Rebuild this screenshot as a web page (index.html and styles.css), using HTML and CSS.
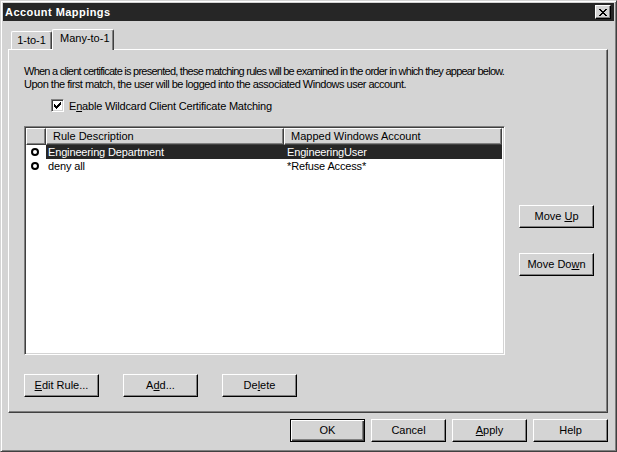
FILE: index.html
```html
<!DOCTYPE html>
<html>
<head>
<meta charset="utf-8">
<link rel="stylesheet" href="styles.css">
</head>
<body>
<div class="window">
  <div class="titlebar">
    <span class="title">Account Mappings</span>
    <span class="close"><svg width="8" height="7" viewBox="0 0 8 7" shape-rendering="crispEdges"><path d="M0 0h2v1h-2zM6 0h2v1h-2zM1 1h2v1h-2zM5 1h2v1h-2zM2 2h4v1h-4zM3 3h2v1h-2zM2 4h4v1h-4zM1 5h2v1h-2zM5 5h2v1h-2zM0 6h2v1h-2zM6 6h2v1h-2z" fill="#000"/></svg></span>
  </div>
  <div class="tabs">
    <div class="tab">1-to-1</div>
    <div class="tab active">Many-to-1</div>
  </div>
  <div class="panel">
    <p class="intro"><span class="line1">When a client certificate is presented, these matching rules will be examined in the order in which they appear below.</span><br>Upon the first match, the user will be logged into the associated Windows user account.</p>
    <div class="check">
      <span class="box"><svg width="7" height="7" viewBox="0 0 7 7" shape-rendering="crispEdges"><path d="M6 0h1v3h-1zM5 1h1v3h-1zM4 2h1v3h-1zM3 3h1v3h-1zM2 4h1v3h-1zM1 3h1v3h-1zM0 2h1v3h-1z" fill="#000"/></svg></span>
      <span>E<u>n</u>able Wildcard Client Certificate Matching</span>
    </div>
    <div class="main">
      <div class="list">
        <div class="header">
          <div class="hcell c0"></div>
          <div class="hcell c1">Rule Description</div>
          <div class="hcell c2">Mapped Windows Account</div>
        </div>
        <div class="row selected">
          <div class="c0"><span class="ring"></span></div>
          <div class="c1">Engineering Department</div>
          <div class="c2">EngineeringUser</div>
        </div>
        <div class="row">
          <div class="c0"><span class="ring"></span></div>
          <div class="c1">deny all</div>
          <div class="c2">*Refuse Access*</div>
        </div>
      </div>
      <div class="side">
        <div class="btn up"><span>Move <u>U</u>p</span></div>
        <div class="btn down"><span>Move Do<u>w</u>n</span></div>
      </div>
    </div>
    <div class="actions">
      <div class="btn"><span><u>E</u>dit Rule...</span></div>
      <div class="btn"><span>A<u>d</u>d...</span></div>
      <div class="btn"><span>De<u>l</u>ete</span></div>
    </div>
  </div>
  <div class="footer">
    <div class="btn default"><span>OK</span></div>
    <div class="btn"><span>Cancel</span></div>
    <div class="btn"><span><u>A</u>pply</span></div>
    <div class="btn"><span>Help</span></div>
  </div>
</div>
</body>
</html>
```

FILE: styles.css
```css
* { box-sizing: border-box; }
html, body { margin: 0; padding: 0; background: #d4d4d4; }
body {
  font-family: "Liberation Sans", Arial, sans-serif;
  font-size: 11px;
  color: #000;
}
u { text-decoration: underline; text-underline-offset: 1px; }

.window {
  width: 617px;
  height: 452px;
  background: #d4d4d4;
  border: 1px solid;
  border-color: #d4d4d4 #404040 #404040 #d4d4d4;
  box-shadow: inset 1px 1px #fff, inset -1px -1px #808080;
  padding: 2px;
}

.titlebar {
  height: 18px;
  background: #262626;
  display: flex;
  align-items: center;
  justify-content: space-between;
  padding: 0 3px 0 2px;
}
.title {
  color: #fff;
  font-weight: bold;
  font-size: 11px;
  letter-spacing: 0.45px;
}
.close {
  width: 16px;
  height: 14px;
  background: #d4d4d4;
  border: 1px solid;
  border-color: #fff #000 #000 #fff;
  box-shadow: inset -1px -1px #808080;
  display: flex;
  align-items: center;
  justify-content: center;
  padding-right: 1px;
}
.close svg { display: block; }

.tabs {
  display: flex;
  align-items: flex-end;
  height: 20px;
  margin-top: 8px;
  padding-left: 8px;
  position: relative;
  z-index: 1;
}
.tab {
  height: 18px;
  padding: 2px 6px 0 6px;
  border-left: 1px solid #fff;
  border-top: 1px solid #fff;
  border-right: 1px solid #404040;
  box-shadow: inset -1px 0 #808080;
  border-radius: 2px 2px 0 0;
  line-height: 13px;
}
.tab:first-child { width: 41px; text-align: center; padding: 2px 0 0 0; }
.tab.active {
  height: 21px;
  margin-bottom: -1px;
  width: 62px;
  padding: 2px 0 0 7px;
  background: #d4d4d4;
}

.panel {
  width: 600px;
  height: 364px;
  margin-left: 5px;
  border: 1px solid;
  border-color: #fff #404040 #404040 #fff;
  box-shadow: inset -1px -1px #808080;
  padding: 15px 0 0 15px;
}

.intro {
  margin: 0;
  line-height: 13px;
  letter-spacing: -0.5px;
}
.line1 {
  letter-spacing: -0.75px;
}

.check {
  display: flex;
  align-items: center;
  margin: 8px 0 0 27px;
  height: 13px;
  gap: 5px;
  letter-spacing: -0.2px;
}
.box {
  width: 13px;
  height: 13px;
  background: #fff;
  border: 1px solid;
  border-color: #808080 #fff #fff #808080;
  box-shadow: inset 1px 1px #404040, inset -1px -1px #d4d4d4;
  display: flex;
  align-items: center;
  justify-content: center;
}
.box svg { display: block; }

.main {
  display: flex;
  margin-top: 14px;
}
.list {
  width: 481px;
  height: 229px;
  background: #fff;
  border: 1px solid;
  border-color: #808080 #fff #fff #808080;
  box-shadow: inset 1px 1px #404040, inset -1px -1px #d4d4d4;
  padding: 1px 2px 2px 1px;
}
.header {
  display: flex;
  height: 17px;
}
.hcell {
  height: 17px;
  background: #d4d4d4;
  border: 1px solid;
  border-color: #fff #404040 #404040 #fff;
  box-shadow: inset -1px -1px #808080;
  padding: 1px 0 0 6px;
  line-height: 13px;
}
.c0 { width: 20px; flex: none; }
.c1 { width: 238px; flex: none; }
.c2 { flex: 1; }
.hcell.c2 { padding-left: 6px; }

.row {
  display: flex;
  height: 14px;
  line-height: 14px;
  letter-spacing: -0.15px;
}
.row .c0 { display: flex; align-items: center; padding-left: 5px; }
.row .c1 { padding-left: 2px; }
.row .c2 { padding-left: 3px; }
.row.selected .c1, .row.selected .c2 { background: #262626; color: #fff; }
.ring {
  width: 8px;
  height: 8px;
  border: 2px solid #000;
  border-radius: 50%;
}

.side {
  display: flex;
  flex-direction: column;
  margin-left: 14px;
}
.btn {
  width: 75px;
  height: 23px;
  background: #d4d4d4;
  border: 1px solid;
  border-color: #fff #000 #000 #fff;
  box-shadow: inset -1px -1px #808080;
  display: flex;
  align-items: center;
  justify-content: center;
  padding-bottom: 1px;
}
.btn.up { margin-top: 79px; }
.btn.down { margin-top: 25px; }

.actions {
  display: flex;
  gap: 24px;
  margin-top: 19px;
}

.footer {
  display: flex;
  justify-content: flex-end;
  gap: 6px;
  margin-top: 6px;
  padding-right: 6px;
}
.btn.default {
  border-color: #000;
  box-shadow: inset 1px 1px #fff, inset -1px -1px #404040, inset -2px -2px #808080;
}
```
